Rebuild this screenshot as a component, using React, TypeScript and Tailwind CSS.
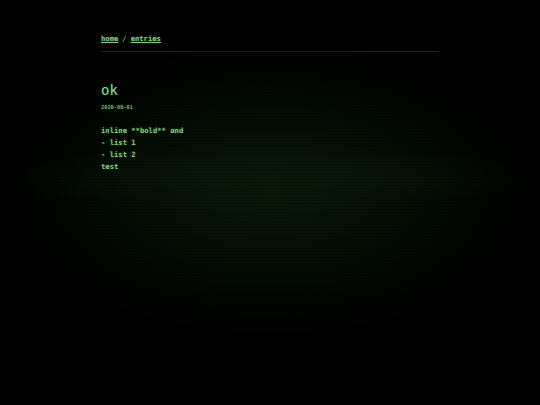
import React from "react";

export default function App() {
  return (
    <div className="relative w-[540px] h-[405px] overflow-hidden bg-black font-['DejaVu_Sans_Mono',monospace] text-[#80c880]">
      <div className="pointer-events-none absolute inset-0 bg-[radial-gradient(ellipse_50%_36%_at_50%_47%,rgba(10,28,10,0.85)_0%,rgba(6,18,6,0.65)_55%,rgba(0,0,0,0)_100%)]" />
      <div className="pointer-events-none absolute inset-0 bg-[radial-gradient(ellipse_52%_8%_at_50%_44%,rgba(10,26,10,0.6)_0%,rgba(0,0,0,0)_100%)]" />
      <div className="pointer-events-none absolute inset-0 bg-[repeating-linear-gradient(to_bottom,rgba(0,0,0,0)_0px,rgba(0,0,0,0)_2px,rgba(0,0,0,0.22)_2px,rgba(0,0,0,0.22)_3px)]" />
      <div className="relative mx-auto w-[338px] pt-[34px] [text-shadow:0_0_2px_rgba(110,210,110,0.35)]">
        <nav className="flex items-center gap-[4px] text-[7.2px] leading-[10px] font-bold text-[#84cc84]">
          <a className="underline underline-offset-[1px]" href="#">home</a>
          <span className="font-normal text-[#78b878]">/</span>
          <a className="underline underline-offset-[1px]" href="#">entries</a>
        </nav>
        <div className="mt-[7px] h-px bg-[#222222]" />
        <h1 className="mt-[30px] text-[14px] leading-[16px] text-[#8cd88c]">ok</h1>
        <div className="mt-[6px] text-[5.3px] leading-[7px] font-bold text-[#68a468]">2020-08-01</div>
        <div className="mt-[14px] text-[7.2px] leading-[12px] font-bold text-[#80c880]">
          <div>inline **bold** and</div>
          <div>- list 1</div>
          <div>- list 2</div>
          <div>test</div>
        </div>
      </div>
    </div>
  );
}
